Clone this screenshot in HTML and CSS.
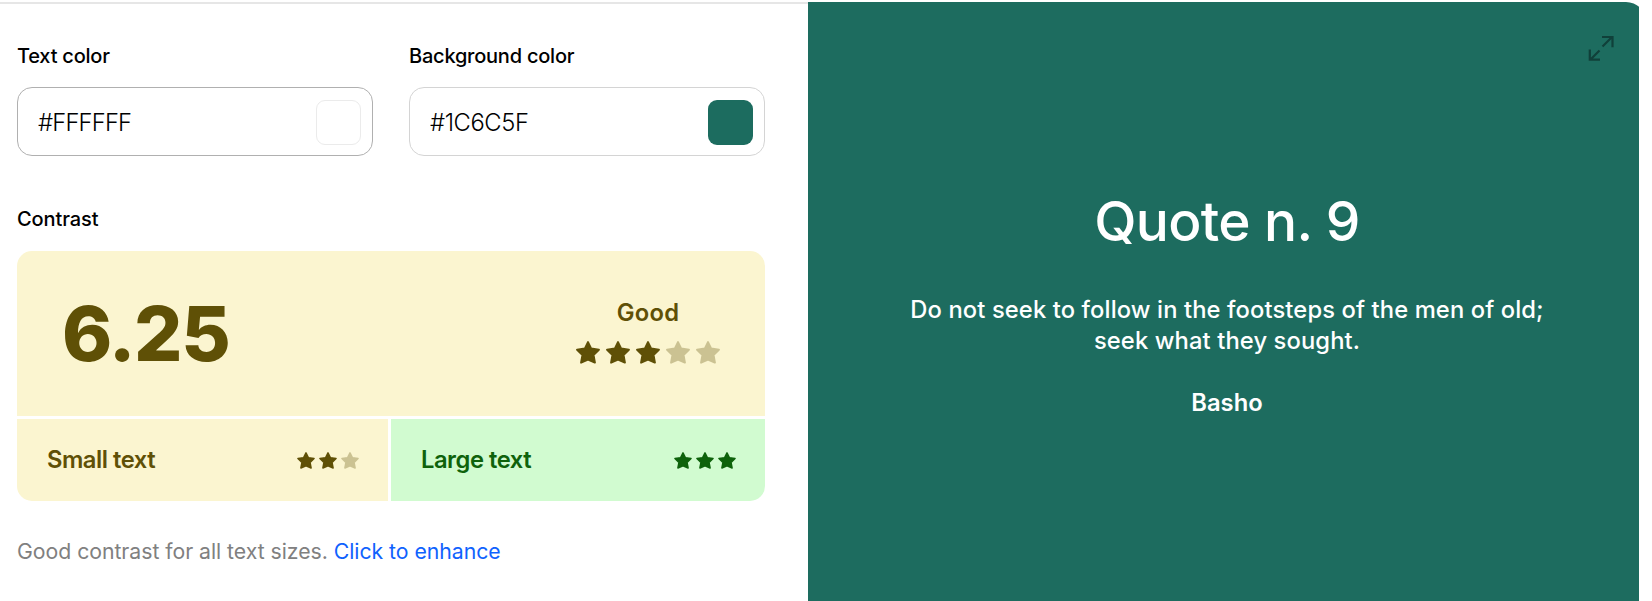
FILE: index.html
```
<!DOCTYPE html>
<html lang="en">
<head>
<meta charset="utf-8">
<title>Color contrast checker</title>
<link rel="stylesheet" href="styles.css">
</head>
<body>
<svg class="defs" width="0" height="0" aria-hidden="true">
  <symbol id="star" viewBox="0 0 24 23"><path d="M12 1.1 15.2 7.6 22.9 8.7 17.5 14 18.9 21.6 12 18.6 5.1 21.6 6.5 14 1.1 8.7 8.8 7.6Z" stroke="currentColor" stroke-width="2" stroke-linejoin="round" fill="currentColor"/></symbol>
</svg>
<main class="checker">
  <section class="controls">
    <div class="fields">
      <div class="field">
        <label class="label" for="text-color">Text color</label>
        <div class="input input-active">
          <input class="value value-tight" id="text-color" value="#FFFFFF" spellcheck="false">
          <span class="swatch swatch-white"></span>
        </div>
      </div>
      <div class="field">
        <label class="label" for="bg-color">Background color</label>
        <div class="input">
          <input class="value" id="bg-color" value="#1C6C5F" spellcheck="false">
          <span class="swatch swatch-green"></span>
        </div>
      </div>
    </div>
    <div class="label contrast-label">Contrast</div>
    <div class="result">
      <div class="score">
        <div class="ratio">6.25</div>
        <div class="rating">
          <div class="verdict">Good</div>
          <div class="stars">
            <svg class="star"><use href="#star"/></svg>
            <svg class="star"><use href="#star"/></svg>
            <svg class="star"><use href="#star"/></svg>
            <svg class="star off"><use href="#star"/></svg>
            <svg class="star off"><use href="#star"/></svg>
          </div>
        </div>
      </div>
      <div class="size size-small">
        <span>Small text</span>
        <div class="stars stars-small">
          <svg class="star"><use href="#star"/></svg>
          <svg class="star"><use href="#star"/></svg>
          <svg class="star off"><use href="#star"/></svg>
        </div>
      </div>
      <div class="size size-large">
        <span>Large text</span>
        <div class="stars stars-small">
          <svg class="star"><use href="#star"/></svg>
          <svg class="star"><use href="#star"/></svg>
          <svg class="star"><use href="#star"/></svg>
        </div>
      </div>
    </div>
    <p class="note">Good contrast for all text sizes. <a class="link" href="#">Click to enhance</a></p>
  </section>
  <section class="preview">
    <svg class="expand" viewBox="0 0 26 26"><path d="M14.5 11.5 24 2M14 2h10.5V12.2M11.5 15.5 2 25M1.8 14.5v10.2H12" fill="none" stroke="currentColor" stroke-width="2.2"/></svg>
    <h1 class="title">Quote n. 9</h1>
    <p class="quote">Do not seek to follow in the footsteps of the men of old;<br>seek what they sought.</p>
    <p class="author">Basho</p>
  </section>
</main>
</body>
</html>
```

FILE: styles.css
```
* { box-sizing: border-box; margin: 0; }
body {
  height: 601px;
  overflow: hidden;
  padding-top: 2px;
  background: #fff;
  color: #000;
  font-family: Inter, sans-serif;
}
.defs { position: absolute; }
.checker {
  display: grid;
  grid-template-columns: 808px 838px;
  width: 1639px;
  height: 599px;
  overflow: hidden;
}
.controls {
  border-top: 2px solid #e6e6e6;
  padding: 37px 43px 0 17px;
}
.fields {
  display: grid;
  grid-template-columns: 1fr 1fr;
  gap: 36px;
}
.label {
  display: block;
  font-size: 20px;
  line-height: 30px;
  font-weight: 500;
  letter-spacing: -0.22px;
}
.input {
  display: flex;
  align-items: center;
  justify-content: space-between;
  height: 69px;
  margin-top: 16px;
  padding: 1px 11px 0 20px;
  border: 1px solid #d4d4d4;
  border-radius: 15px;
}
.input-active { border-color: #b0b0b0; }
.value {
  width: 200px;
  padding: 1px 0 0;
  border: 0;
  outline: 0;
  background: none;
  color: #000;
  font: 300 23.75px/30px Inter, sans-serif;
  letter-spacing: -0.4px;
}
.value-tight { letter-spacing: -0.8px; }
.swatch {
  width: 45px;
  height: 45px;
  border-radius: 9px;
}
.swatch-white { border: 1px solid #ebebeb; }
.swatch-green { background: #1c6c5f; }
.contrast-label { margin-top: 48px; letter-spacing: -0.1px; }
.result {
  display: grid;
  grid-template: 165px 82px / 371px 374px;
  gap: 3px;
  margin-top: 17px;
  border-radius: 15px;
  overflow: hidden;
  color: #5f5006;
}
.score {
  grid-column: 1 / 3;
  display: flex;
  align-items: center;
  justify-content: space-between;
  padding: 0 45px;
  background: #fbf5d0;
}
.ratio {
  padding-bottom: 2px;
  font-size: 76px;
  line-height: 90px;
  font-weight: 780;
  letter-spacing: -1.4px;
}
.rating {
  display: flex;
  flex-direction: column;
  align-items: center;
  gap: 13px;
  padding-bottom: 5px;
}
.verdict {
  font-size: 23.75px;
  line-height: 30px;
  font-weight: 580;
  letter-spacing: 0.2px;
}
.stars { display: flex; gap: 6px; }
.star { display: block; width: 24px; height: 23px; }
.off { opacity: .3; }
.stars-small { gap: 4px; }
.stars-small .star { width: 18px; height: 17px; }
.size {
  display: flex;
  align-items: center;
  justify-content: space-between;
  padding: 0 29px 0 30px;
  font-size: 23.75px;
  font-weight: 560;
  letter-spacing: -0.48px;
}
.size span { padding-bottom: 1px; }
.size-small { background: #fbf5d0; }
.size-large { background: #d1fbd0; color: #0e620b; }
.note {
  margin-top: 35px;
  font-size: 21.25px;
  line-height: 30px;
  letter-spacing: -0.04px;
  color: #808080;
}
.link { color: #0f62fe; text-decoration: none; }
.preview {
  position: relative;
  padding-top: 183px;
  border-radius: 0 20px 0 0;
  background: #1d6c5f;
  color: #fff;
  text-align: center;
}
.expand {
  position: absolute;
  top: 33px;
  right: 32px;
  width: 26px;
  height: 26px;
  color: #10403a;
}
.title {
  font-size: 55px;
  line-height: 72px;
  font-weight: 450;
  letter-spacing: -0.65px;
}
.quote {
  margin-top: 37px;
  font-size: 23.75px;
  line-height: 31.25px;
  font-weight: 450;
  letter-spacing: 0.11px;
}
.author {
  margin-top: 30px;
  font-size: 23.75px;
  line-height: 31px;
  font-weight: 600;
}
```
